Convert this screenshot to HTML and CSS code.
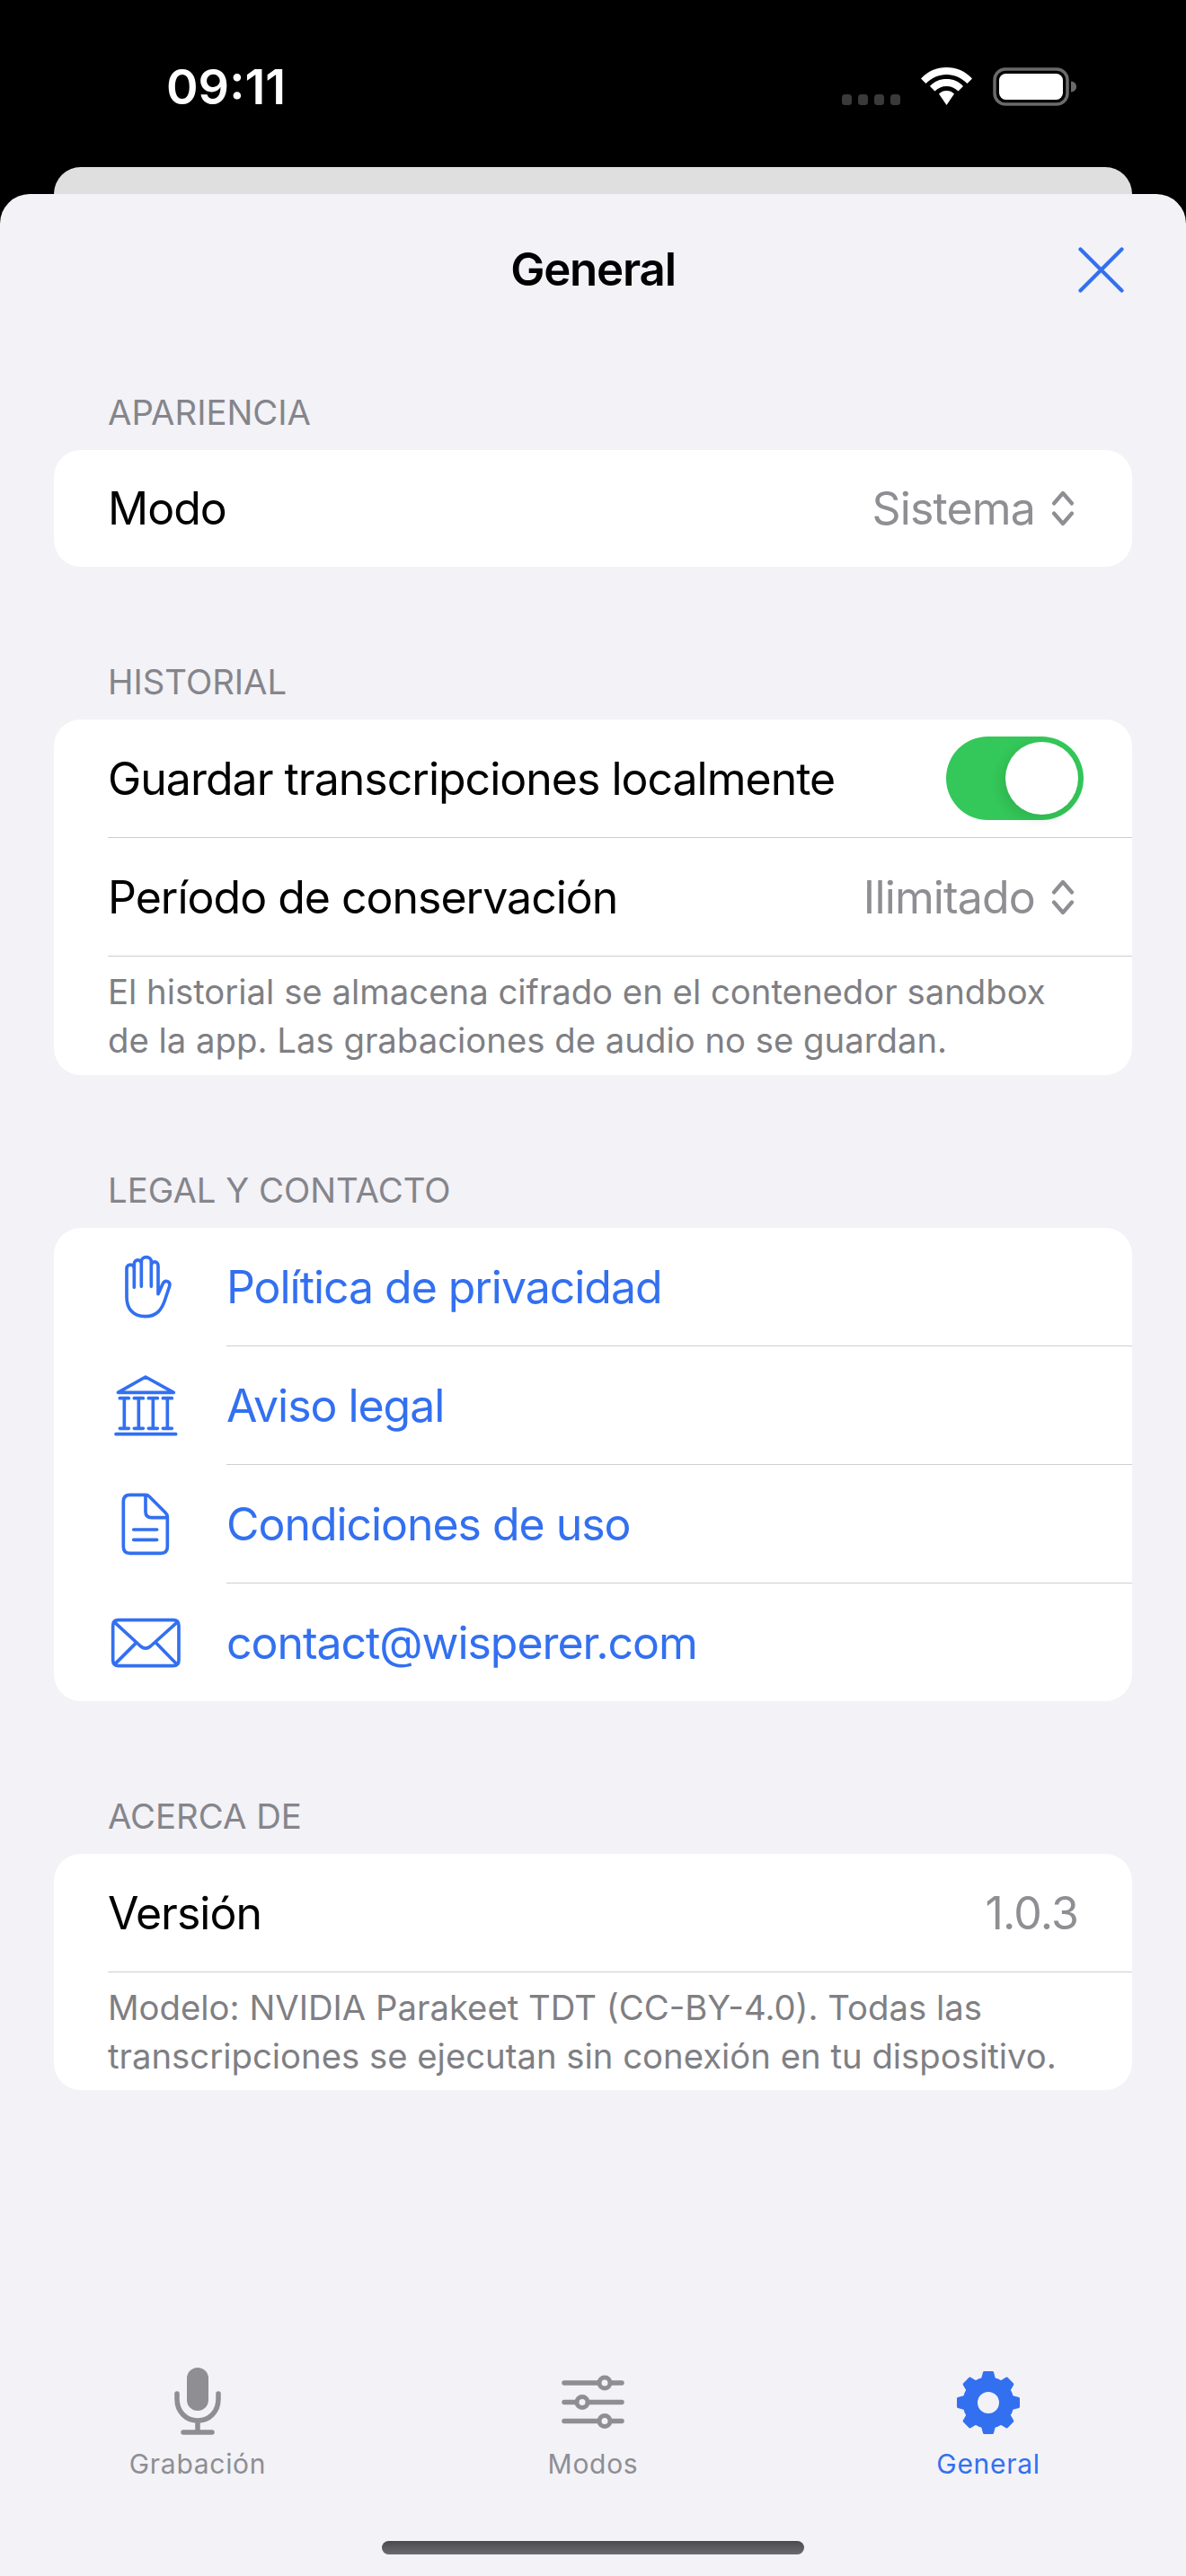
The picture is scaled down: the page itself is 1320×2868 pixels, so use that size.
FILE: index.html
```html
<!DOCTYPE html>
<html lang="es">
<head>
<meta charset="utf-8">
<title>General</title>
<link rel="stylesheet" href="styles.css">
</head>
<body>
<div class="screen">
  <div class="status">
    <span class="time">09:11</span>
    <div class="status-icons">
      <div class="signal"><i></i><i></i><i></i><i></i></div>
      <svg class="wifi" viewBox="0 0 57 42"><path d="M28.5 0C17.5 0 8 4 0 12.500L5.500 18C12 11.500 20 8 28.500 8S45 11.500 51.500 18L57 12.500C49 4 39.500 0 28.500 0Z"/><path d="M28.500 13C21 13 15 15.500 10 21L15.500 26.500C19 23 23.500 21 28.500 21S38 23 41.500 26.500L47 21C42 15.500 36 13 28.500 13Z"/><path d="M28.500 26C25 26 22.500 27 20 29.500L28.500 42L37 29.500C34.500 27 32 26 28.500 26Z"/></svg>
      <svg class="battery" viewBox="0 0 93 43"><rect x="2" y="2" width="81" height="39" rx="12" fill="none" stroke="#6a6a6a" stroke-width="3.500"/><rect x="7" y="7" width="71" height="29" rx="7.500" fill="#fff"/><path d="M87 15.500C91 16 93 18.500 93 21.500S91 27 87 27.500Z" fill="#6a6a6a"/></svg>
    </div>
  </div>
  <div class="peek"></div>
  <main class="sheet">
    <header class="sheet-head">
      <h1 class="title">General</h1>
      <svg class="close" viewBox="0 0 51 51"><path d="M2.500 2.500L48.500 48.500M48.500 2.500L2.500 48.500"/></svg>
    </header>

    <section class="group group-first">
      <h2 class="group-title">APARIENCIA</h2>
      <div class="card">
        <div class="row row-single">
          <span class="row-text">Modo</span>
          <span class="row-value">Sistema</span>
          <svg class="chev" viewBox="0 0 26 40"><path d="M3 14.500L13 3L23 14.500M3 25.500L13 37L23 25.500"/></svg>
        </div>
      </div>
    </section>

    <section class="group">
      <h2 class="group-title">HISTORIAL</h2>
      <div class="card">
        <div class="row">
          <span class="row-text">Guardar transcripciones localmente</span>
          <div class="toggle"><div class="knob"></div></div>
        </div>
        <div class="row">
          <span class="row-text">Período de conservación</span>
          <span class="row-value">Ilimitado</span>
          <svg class="chev" viewBox="0 0 26 40"><path d="M3 14.500L13 3L23 14.500M3 25.500L13 37L23 25.500"/></svg>
        </div>
        <p class="note">El historial se almacena cifrado en el contenedor sandbox<br>de la app. Las grabaciones de audio no se guardan.</p>
      </div>
    </section>

    <section class="group">
      <h2 class="group-title">LEGAL Y CONTACTO</h2>
      <div class="card">
        <div class="link-row">
          <svg class="link-icon" viewBox="60 109 258 216"><path d="M123 180V250C123 290 145 315 185 315C225 315 240 290 250 262L266 214C270 198 252 190 244 205L228 240V147C228 128 205 128 205 147V215M205 215V132C205 112 172 112 172 132V215M172 140C172 122 148 122 148 140V218M148 155C148 138 123 138 123 155V180"/></svg>
          <span class="link-text">Política de privacidad</span>
        </div>
        <div class="link-row">
          <svg class="link-icon" viewBox="60 504 258 216"><path d="M94 568L186 516L280 568ZM100 587H130M148 587H178M196 587H226M244 587H274M100 688H130M148 688H178M196 688H226M244 688H274M115 587V688M163 587V688M211 587V688M259 587V688M87 707H287"/></svg>
          <span class="link-text">Aviso legal</span>
        </div>
        <div class="link-row">
          <svg class="link-icon" viewBox="60 902 258 216"><path d="M134 912H186Q193 912 198 917L252 971Q259 978 259 985V1085Q259 1107 237 1107H134Q112 1107 112 1085V934Q112 912 134 912ZM186 915V968Q186 988 206 988H257M146 1028H224M146 1062H224"/></svg>
          <span class="link-text">Condiciones de uso</span>
        </div>
        <div class="link-row link-row-last">
          <svg class="link-icon" viewBox="60 1297 258 216"><path d="M96 1329H278Q297 1329 297 1348V1463Q297 1482 278 1482H96Q77 1482 77 1463V1348Q77 1329 96 1329ZM84 1338L170 1417Q186 1430 202 1417L290 1338M84 1476L156 1404M290 1476L220 1404"/></svg>
          <span class="link-text">contact@wisperer.com</span>
        </div>
      </div>
    </section>

    <section class="group">
      <h2 class="group-title">ACERCA DE</h2>
      <div class="card">
        <div class="row">
          <span class="row-text">Versión</span>
          <span class="row-value">1.0.3</span>
        </div>
        <p class="note note-last">Modelo: NVIDIA Parakeet TDT (CC-BY-4.0). Todas las<br>transcripciones se ejecutan sin conexión en tu dispositivo.</p>
      </div>
    </section>

    <nav class="tabs">
      <div class="tab">
        <svg class="tab-icon" viewBox="0 0 80 80"><rect x="28" y="1" width="24" height="48" rx="12" class="solid"/><path class="line" d="M17 30V36C17 50 27 60 40 60S63 50 63 36V30M40 60V72M24 73H56"/></svg>
        <span class="tab-label">Grabación</span>
      </div>
      <div class="tab">
        <svg class="tab-icon" viewBox="0 0 80 80"><path class="line" d="M8 18H72M8 39.500H72M8 60.500H72"/><circle class="knob-dot" cx="53" cy="18" r="6"/><circle class="knob-dot" cx="28" cy="39.500" r="6"/><circle class="knob-dot" cx="53" cy="60.500" r="6"/></svg>
        <span class="tab-label">Modos</span>
      </div>
      <div class="tab tab-active">
        <svg class="tab-icon" viewBox="0 0 80 80">
          <g class="gear">
            <circle cx="40" cy="40" r="27"/>
            <path d="M33.500 14L35.500 6.500H44.500L46.500 14Z"/>
            <path d="M33.500 14L35.500 6.500H44.500L46.500 14Z" transform="rotate(45 40 40)"/>
            <path d="M33.500 14L35.500 6.500H44.500L46.500 14Z" transform="rotate(90 40 40)"/>
            <path d="M33.500 14L35.500 6.500H44.500L46.500 14Z" transform="rotate(135 40 40)"/>
            <path d="M33.500 14L35.500 6.500H44.500L46.500 14Z" transform="rotate(180 40 40)"/>
            <path d="M33.500 14L35.500 6.500H44.500L46.500 14Z" transform="rotate(225 40 40)"/>
            <path d="M33.500 14L35.500 6.500H44.500L46.500 14Z" transform="rotate(270 40 40)"/>
            <path d="M33.500 14L35.500 6.500H44.500L46.500 14Z" transform="rotate(315 40 40)"/>
          </g>
          <circle class="gear-hole" cx="40" cy="40" r="12"/>
        </svg>
        <span class="tab-label">General</span>
      </div>
    </nav>
    <div class="home-wrap"><div class="home"></div></div>
  </main>
</div>
</body>
</html>
```

FILE: styles.css
```css
* { box-sizing: border-box; }
html, body { margin: 0; padding: 0; background: #000; }
body { font-family: Inter, "Liberation Sans", sans-serif; }
.screen { width: 1320px; height: 2868px; display: flex; flex-direction: column; overflow: hidden; background: #000; }

.status { height: 186px; flex: none; display: flex; justify-content: space-between; padding: 0 122px 0 185px; position: relative; }
.time { color: #fff; font-size: 54px; font-weight: 600; line-height: 66px; margin-top: 64px; letter-spacing: 0; }
.status-icons { display: flex; align-items: flex-start; padding-top: 75px; }
.signal { display: flex; gap: 7px; margin-top: 30px; margin-right: 23px; }
.signal i { display: block; width: 11px; height: 12px; border-radius: 3.500px; background: #3a3a3a; }
.wifi { width: 57px; height: 42px; fill: #fff; margin-right: 23px; }
.battery { width: 93px; height: 43px; }

.peek { height: 30px; flex: none; margin: 0 60px; background: #dfdfdf; border-radius: 30px 30px 0 0; }

.sheet { flex: 1; background: #f2f2f7; border-radius: 33px 33px 0 0; display: flex; flex-direction: column; position: relative; }
.sheet-head { height: 168px; flex: none; position: relative; display: flex; align-items: center; justify-content: center; }
.title { margin: 0; font-size: 51px; font-weight: 600; color: #000; letter-spacing: -1.200px; line-height: 62px; }
.close { position: absolute; right: 69px; top: 59px; width: 51px; height: 51px; fill: none; stroke: #3370f0; stroke-width: 4.200; stroke-linecap: round; }

.group { padding: 0 60px; margin-top: 66px; }
.group-first { margin-top: 0; }
.group-title { margin: 0 0 19px 60px; font-size: 38.300px; font-weight: 400; line-height: 46px; color: #85858b; height: 85px; display: flex; align-items: flex-end; }
.group-first .group-title { height: 98px; }
.card { background: #fff; border-radius: 30px; overflow: hidden; }

.row { height: 132px; margin-left: 60px; padding-right: 60px; display: flex; align-items: center; border-bottom: 1.500px solid #cfcfd2; font-size: 50px; line-height: 62px; }
.row-single { border-bottom: 0; height: 130px; }
.row-text { flex: 1; color: #000; letter-spacing: -1px; white-space: nowrap; }
.row-value { color: #8e8e93; letter-spacing: -0.850px; white-space: nowrap; }
.chev { width: 26px; height: 40px; margin-left: 18px; margin-right: 4px; fill: none; stroke: #8e8e93; stroke-width: 4.200; stroke-linecap: round; stroke-linejoin: round; }

.toggle { width: 153px; height: 93px; margin-right: -6px; border-radius: 47px; background: #34c759; padding: 6px; display: flex; justify-content: flex-end; }
.knob { width: 81px; height: 81px; border-radius: 50%; background: #fff; box-shadow: -4px 5px 14px rgba(0,0,0,0.10); }

.note { margin: 0 0 0 60px; padding: 12px 20px 12px 0; height: 132px; font-size: 38.300px; line-height: 54px; color: #7f7f84; white-space: nowrap; }
.note-last { height: 131px; }

.link-row { height: 132px; padding-left: 60px; display: flex; align-items: stretch; }
.link-row-last { height: 131px; }
.link-icon { flex: none; width: 86px; height: 72px; align-self: center; margin-right: 46px; fill: none; stroke: #3370f0; stroke-width: 11; stroke-linecap: round; stroke-linejoin: round; }
.link-text { flex: 1; display: flex; align-items: center; font-size: 50px; line-height: 62px; color: #3370f0; letter-spacing: -1.050px; border-bottom: 1.500px solid #cfcfd2; }
.link-row-last .link-text { border-bottom: 0; }

.tabs { position: absolute; left: 0; right: 0; top: 2419px; display: grid; grid-template-columns: repeat(3, 440px); }
.tab { display: flex; flex-direction: column; align-items: center; color: #8e8e93; }
.tab-active { color: #3370f0; }
.tab-icon { width: 80px; height: 80px; }
.tab-label { font-size: 30px; line-height: 38px; margin-top: 9px; font-weight: 400; letter-spacing: 0.700px; }
.solid { fill: #8e8e93; }
.line { fill: none; stroke: #8e8e93; stroke-width: 5.500; stroke-linecap: round; }
.knob-dot { fill: #f2f2f7; stroke: #8e8e93; stroke-width: 5; }
.gear { fill: #3370f0; stroke: #3370f0; stroke-width: 3; stroke-linejoin: round; }
.gear-hole { fill: #f2f2f7; }

.home-wrap { position: absolute; left: 0; right: 0; top: 2613px; display: flex; justify-content: center; }
.home { width: 470px; height: 15px; border-radius: 8px; background: linear-gradient(#4a4a4c, #6c6c6e); }
```
